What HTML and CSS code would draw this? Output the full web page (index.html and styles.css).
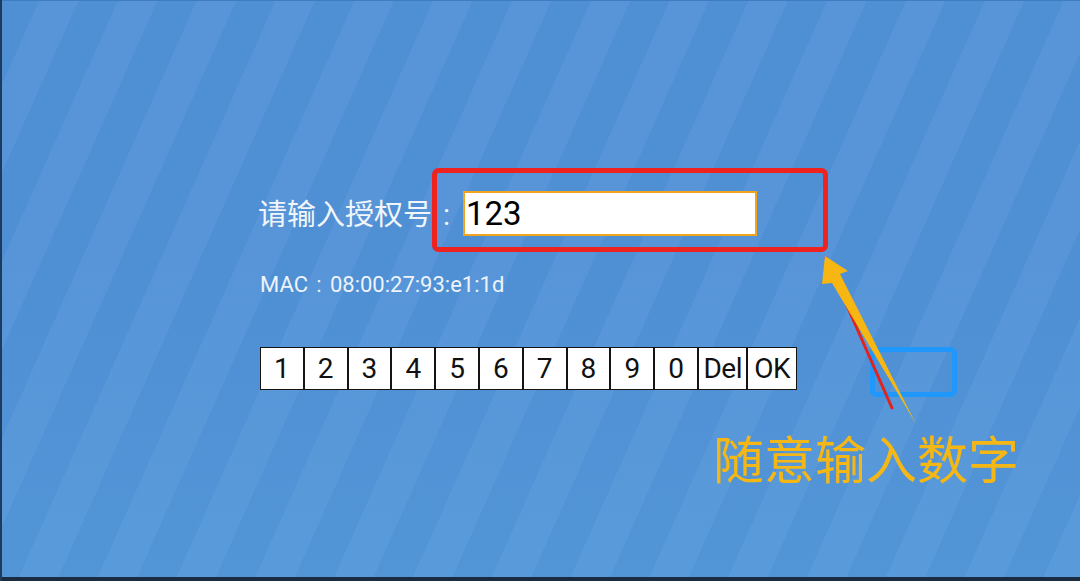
FILE: index.html
```html
<!DOCTYPE html>
<html lang="zh-CN">
<head>
<meta charset="utf-8">
<title>授权</title>
<link rel="stylesheet" href="styles.css">
</head>
<body>
<div class="screen">
  <div class="panel">
    <div class="row-auth">
      <span class="label">请输入授权号<span class="colon colon-lg">:</span></span>
      <div class="input">123</div>
    </div>
    <div class="row-mac">MAC<span class="colon colon-sm">:</span>08:00:27:93:e1:1d</div>
    <div class="keypad">
      <div class="key">1</div>
      <div class="key">2</div>
      <div class="key">3</div>
      <div class="key">4</div>
      <div class="key">5</div>
      <div class="key">6</div>
      <div class="key">7</div>
      <div class="key">8</div>
      <div class="key">9</div>
      <div class="key">0</div>
      <div class="key key-wide">Del</div>
      <div class="key key-wide">OK</div>
    </div>
  </div>

  <svg class="annot" width="1080" height="581" viewBox="0 0 1080 581" xmlns="http://www.w3.org/2000/svg">
    <rect x="434.5" y="170.5" width="391" height="79" rx="4" fill="none" stroke="#ee2320" stroke-width="5"/>
    <rect x="872.5" y="349.5" width="82" height="45" rx="4" fill="none" stroke="#1f97fb" stroke-width="5"/>
    <line x1="826" y1="258" x2="892" y2="408" stroke="#e3221d" stroke-width="3" stroke-linecap="round"/>
    <polygon points="825,256 848,271 840,274 916,424 832,283 822,284" fill="#f7b612"/>
  </svg>
  <div class="note">随意输入数字</div>
</div>
</body>
</html>
```

FILE: styles.css
```css
html, body {
  margin: 0;
  padding: 0;
}

body {
  width: 1080px;
  height: 581px;
  overflow: hidden;
  font-family: Roboto, "Noto Sans CJK SC", sans-serif;
}

.screen {
  position: relative;
  width: 1080px;
  height: 581px;
  box-sizing: border-box;
  background:
    linear-gradient(to bottom, rgba(90, 170, 230, 0) 45%, rgba(100, 185, 230, 0.16) 100%),
    repeating-linear-gradient(114deg, #4f8fd4 0px, #4f8fd4 36px, #5795d8 36px, #5795d8 72px);
  box-shadow: inset 2px 0 0 #1e3a5f, inset 0 1px 0 #3f7cc0, inset 0 -4px 0 #1b2b40;
}

.panel {
  padding: 191px 0 0 258px;
}

.row-auth {
  display: flex;
  align-items: center;
  height: 45px;
}

.label {
  font-size: 29px;
  line-height: 45px;
  color: #f2f6fb;
  margin-top: 3px;
}

.colon {
  display: inline-block;
  text-align: center;
}

.colon-lg {
  width: 29px;
}

.colon-sm {
  width: 22px;
}

.input {
  width: 294px;
  height: 45px;
  margin-left: 2px;
  box-sizing: border-box;
  border: 2px solid #f2a51c;
  background: #ffffff;
  color: #000000;
  font-size: 33px;
  line-height: 41px;
  padding-left: 1px;
}

.row-mac {
  margin-top: 36px;
  padding-left: 2px;
  height: 26px;
  font-size: 22px;
  line-height: 26px;
  color: #eef3fb;
}

.keypad {
  display: flex;
  margin-top: 49px;
  padding-left: 2px;
}

.key {
  width: 43.8px;
  height: 43px;
  box-sizing: border-box;
  border: 1px solid #141414;
  background: #ffffff;
  color: #111111;
  font-size: 28px;
  line-height: 41px;
  text-align: center;
}

.key-wide {
  width: 49.5px;
  letter-spacing: -0.5px;
}

.annot {
  position: absolute;
  left: 0;
  top: 0;
  pointer-events: none;
}

.note {
  position: absolute;
  left: 713px;
  top: 432px;
  font-family: "Noto Sans CJK SC", sans-serif;
  font-weight: 400;
  font-size: 51px;
  line-height: 51px;
  color: #f5b716;
  white-space: nowrap;
}
```
